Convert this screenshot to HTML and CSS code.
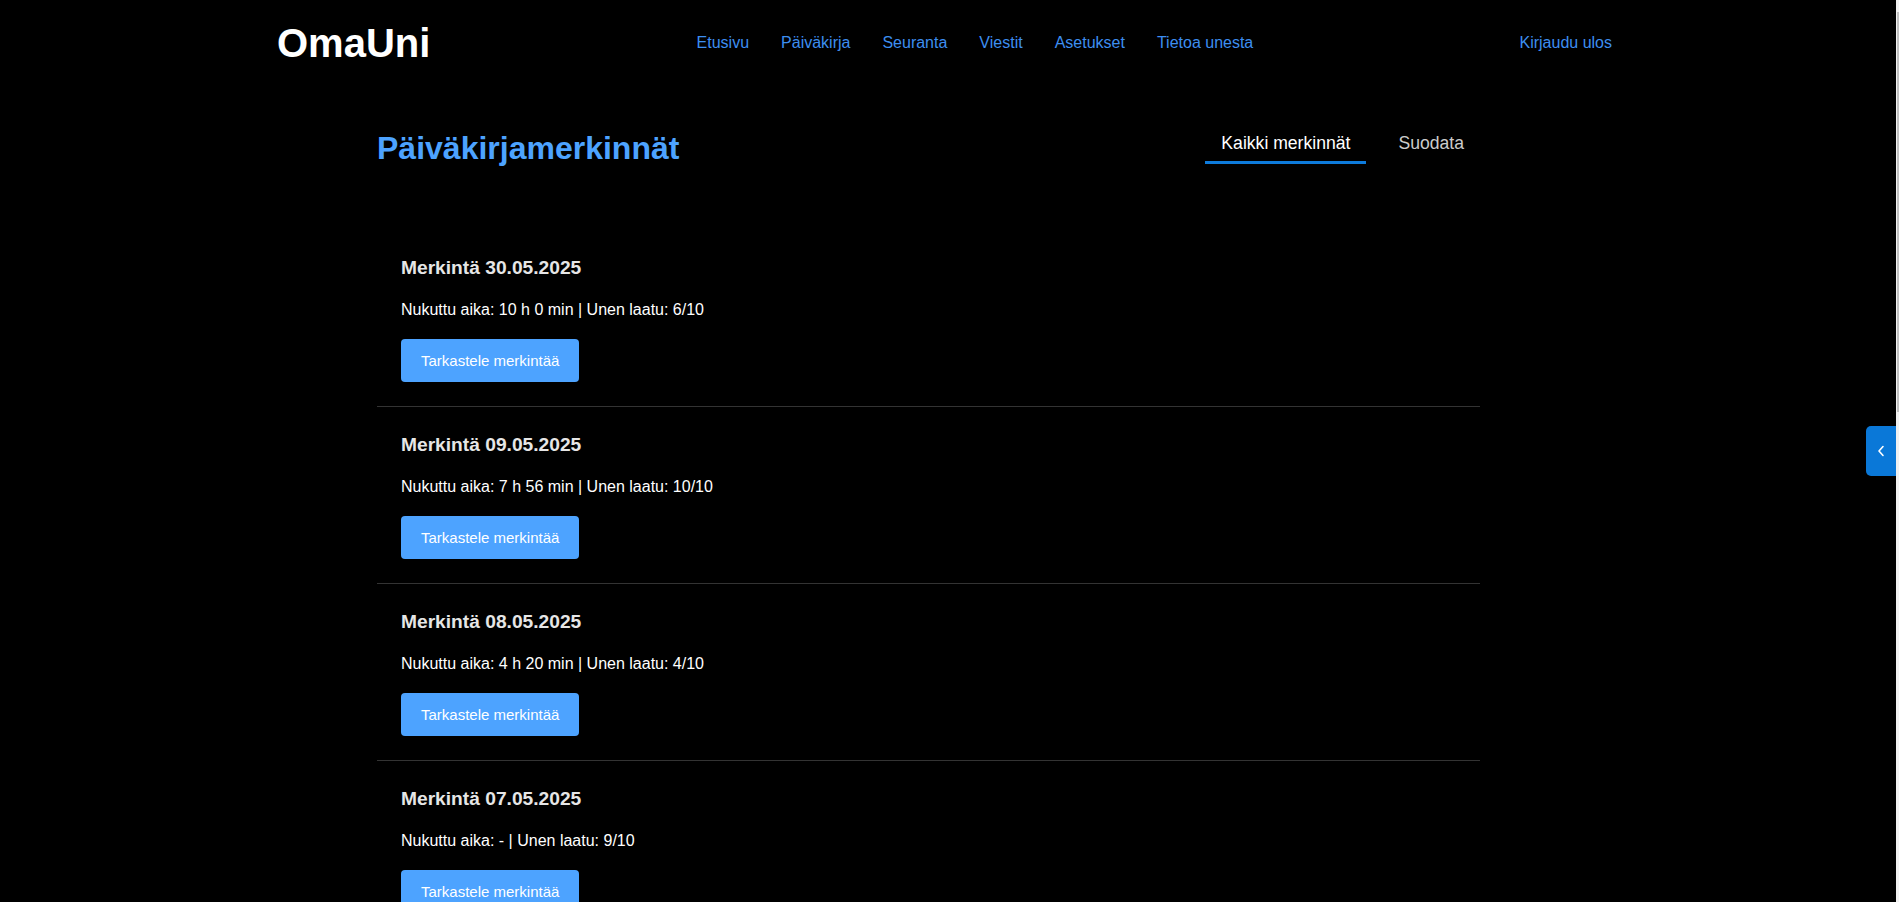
FILE: index.html
```html
<!DOCTYPE html>
<html lang="fi">
<head>
<meta charset="utf-8">
<title>OmaUni – Päiväkirja</title>
<link rel="stylesheet" href="styles.css">
</head>
<body>
<header class="header">
  <div class="logo">OmaUni</div>
  <nav class="nav">
    <a href="#">Etusivu</a>
    <a href="#">Päiväkirja</a>
    <a href="#">Seuranta</a>
    <a href="#">Viestit</a>
    <a href="#">Asetukset</a>
    <a href="#">Tietoa unesta</a>
  </nav>
  <a class="logout" href="#">Kirjaudu ulos</a>
</header>

<main class="main">
  <div class="toprow">
    <h1 class="title">Päiväkirjamerkinnät</h1>
    <div class="tabs">
      <div class="tab active">Kaikki merkinnät</div>
      <div class="tab">Suodata</div>
    </div>
  </div>

  <div class="list">
    <div class="entry">
      <h3>Merkintä 30.05.2025</h3>
      <p>Nukuttu aika: 10 h 0 min | Unen laatu: 6/10</p>
      <button class="btn">Tarkastele merkintää</button>
    </div>
    <div class="entry">
      <h3>Merkintä 09.05.2025</h3>
      <p>Nukuttu aika: 7 h 56 min | Unen laatu: 10/10</p>
      <button class="btn">Tarkastele merkintää</button>
    </div>
    <div class="entry">
      <h3>Merkintä 08.05.2025</h3>
      <p>Nukuttu aika: 4 h 20 min | Unen laatu: 4/10</p>
      <button class="btn">Tarkastele merkintää</button>
    </div>
    <div class="entry">
      <h3>Merkintä 07.05.2025</h3>
      <p>Nukuttu aika: - | Unen laatu: 9/10</p>
      <button class="btn">Tarkastele merkintää</button>
    </div>
    <div class="entry">
      <h3>Merkintä 06.05.2025</h3>
      <p>Nukuttu aika: 8 h 0 min | Unen laatu: 7/10</p>
      <button class="btn">Tarkastele merkintää</button>
    </div>
  </div>
</main>

<div class="side-toggle">
  <svg width="8" height="12" viewBox="0 0 8 12"><polyline points="6,1.5 2,6 6,10.5" fill="none" stroke="#fff" stroke-width="1.6" stroke-linecap="round" stroke-linejoin="round"/></svg>
</div>

<div class="scrollbar"><div class="thumb"></div></div>
</body>
</html>
```

FILE: styles.css
```css
html, body {
  margin: 0;
  padding: 0;
  height: 100%;
  overflow: hidden;
  background: #000;
  font-family: "Liberation Sans", Arial, sans-serif;
  color: #fff;
}

.header {
  display: flex;
  justify-content: space-between;
  align-items: center;
  padding: 20px 287px 20px 277px;
}

.logo {
  font-size: 40px;
  line-height: 46px;
  font-weight: bold;
  color: #fff;
}

.nav {
  display: flex;
  gap: 32px;
}

.nav a,
.logout {
  color: #3d8ef0;
  font-size: 16px;
  line-height: 18px;
  text-decoration: none;
}

.main {
  width: 1103px;
  margin-left: 377px;
  padding-top: 39px;
}

.toprow {
  display: flex;
  justify-content: space-between;
  align-items: flex-start;
}

.title {
  margin: 5px 0 0;
  font-size: 32px;
  line-height: 37px;
  font-weight: bold;
  color: #4da3ff;
}

.tabs {
  display: flex;
  gap: 16px;
}

.tab {
  font-size: 17.6px;
  line-height: 20px;
  padding: 8px 16px;
  border-bottom: 3px solid transparent;
  color: #cccccc;
}

.tab.active {
  color: #fff;
  border-bottom-color: #0d7bdc;
}

.list {
  margin-top: 63px;
}

.entry {
  display: flex;
  flex-direction: column;
  align-items: flex-start;
  padding: 27px 24px 24px;
  border-bottom: 1px solid #333;
}

.entry h3 {
  margin: 0 0 22px;
  font-size: 19.2px;
  line-height: 22px;
  font-weight: bold;
  color: #e6e6e6;
}

.entry p {
  margin: 0 0 20px;
  font-size: 16px;
  line-height: 18px;
  color: #fff;
}

.btn {
  font-family: inherit;
  font-size: 15px;
  line-height: 17px;
  padding: 13px 20px;
  background: #4da3ff;
  color: #fff;
  border: 0;
  border-radius: 4px;
}

.side-toggle {
  position: fixed;
  right: 3px;
  top: 426px;
  width: 30px;
  height: 50px;
  background: #0a78d8;
  border-radius: 5px 0 0 5px;
  display: flex;
  align-items: center;
  justify-content: center;
}

.scrollbar {
  position: fixed;
  right: 0;
  top: 0;
  width: 3px;
  height: 100%;
  background: #f1f1f1;
}

.thumb {
  margin-top: 12px;
  margin-left: 1px;
  width: 2px;
  height: 400px;
  background: #c1c1c1;
}
```
